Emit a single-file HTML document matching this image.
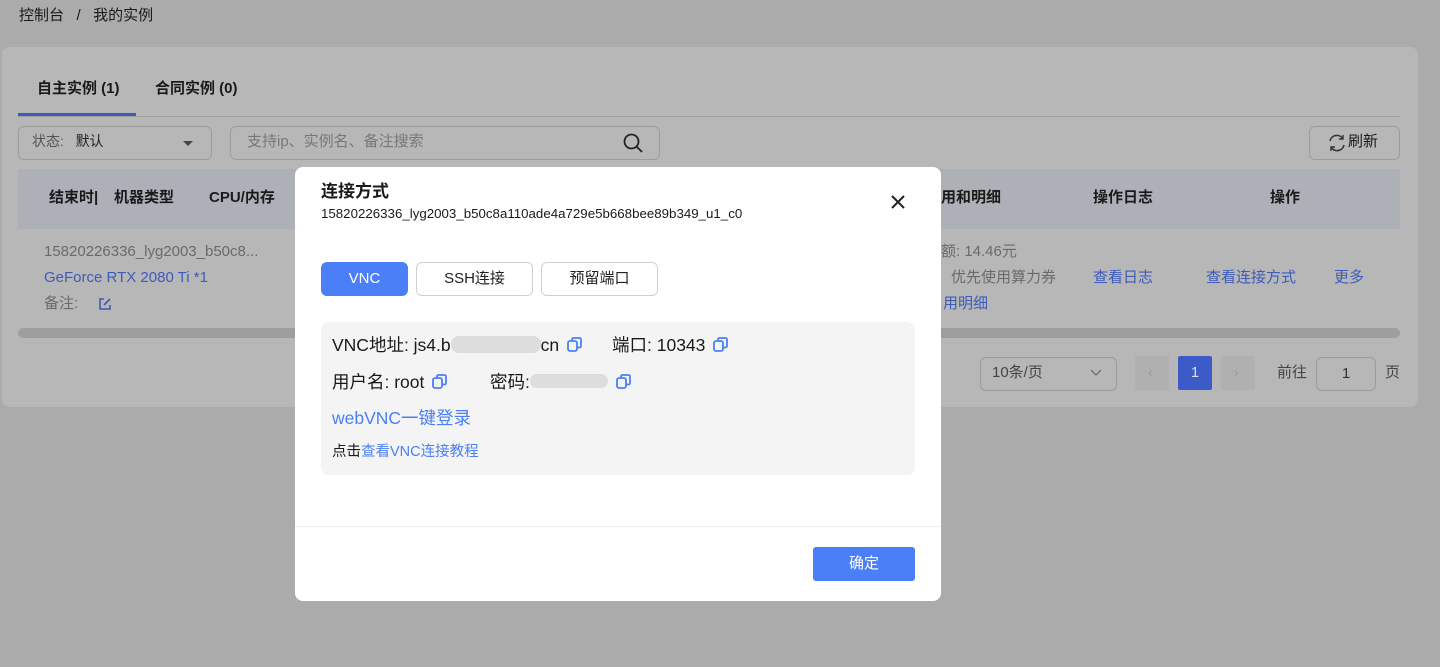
<!DOCTYPE html>
<html><head><meta charset="utf-8"><style>
*{box-sizing:border-box;margin:0;padding:0}
body{width:1440px;height:667px;overflow:hidden;background:#ababab;font-family:"Liberation Sans","Noto Sans CJK SC",sans-serif;color:#1a1a1a;position:relative}
.abs{position:absolute}
.card{left:2px;top:47px;width:1416px;height:360px;background:#b7b7b7;border-radius:8px}
.t{font-size:14px;white-space:nowrap;line-height:1.2}
.blue{color:#3d5bb8}
.input{border:1px solid #9c9c9c;border-radius:6px;background:#b7b7b7}
.modal{left:295px;top:167px;width:646px;height:434px;background:#fff;border-radius:8px}
.btn{position:absolute;top:95px;height:34px;border-radius:6px;border:1px solid #d0d0d0;font-size:15px;text-align:center;line-height:32px;color:#222}
.cp{display:inline-block;vertical-align:-1px;margin-left:8px}
</style></head><body>
<div class="abs t" style="left:19px;top:7px;font-size:15px">控制台 &nbsp;&nbsp;/ &nbsp;&nbsp;我的实例</div>
<div class="abs card"></div>
<div class="abs t" style="left:37px;top:80px;font-weight:bold;font-size:15px">自主实例 (1)</div>
<div class="abs t" style="left:155px;top:80px;font-weight:bold;font-size:15px">合同实例 (0)</div>
<div class="abs" style="left:18px;top:113px;width:118px;height:3px;background:#3d5bb8"></div>
<div class="abs" style="left:18px;top:116px;width:1382px;height:1px;background:#a0a0a0"></div>
<div class="abs input" style="left:18px;top:126px;width:194px;height:34px"></div>
<div class="abs t" style="left:32px;top:133px;color:#555">状态: &nbsp;&nbsp;<span style="color:#222">默认</span></div>
<div class="abs" style="left:183px;top:141px;border:5px solid transparent;border-top-color:#444"></div>
<div class="abs input" style="left:230px;top:126px;width:430px;height:34px"></div>
<div class="abs t" style="left:247px;top:133px;color:#777;font-size:15px">支持ip、实例名、备注搜索</div>
<svg class="abs" style="left:622px;top:132px" width="22" height="22" viewBox="0 0 22 22"><circle cx="9.5" cy="9.5" r="7" fill="none" stroke="#222" stroke-width="1.8"/><path d="M15 15l5 5" stroke="#222" stroke-width="1.8"/></svg>
<div class="abs input" style="left:1309px;top:126px;width:91px;height:34px"></div>
<svg class="abs" style="left:1327px;top:133px" width="20" height="20" viewBox="0 0 20 20"><path d="M16 6A7 7 0 0 0 3 8M4 14a7 7 0 0 0 13-2" fill="none" stroke="#333" stroke-width="1.6"/><path d="M16 2v4h-4M4 18v-4h4" fill="none" stroke="#333" stroke-width="1.4"/></svg>
<div class="abs t" style="left:1348px;top:133px;font-size:15px">刷新</div>
<div class="abs" style="left:18px;top:169px;width:1382px;height:60px;background:#adb1b7"></div>
<div class="abs t" style="left:49px;top:189px;font-weight:bold;font-size:15px">结束时|</div>
<div class="abs t" style="left:114px;top:189px;font-weight:bold;font-size:15px">机器类型</div>
<div class="abs t" style="left:209px;top:189px;font-weight:bold;font-size:15px">CPU/内存</div>
<div class="abs t" style="left:941px;top:189px;font-weight:bold;font-size:15px">用和明细</div>
<div class="abs t" style="left:1093px;top:189px;font-weight:bold;font-size:15px">操作日志</div>
<div class="abs t" style="left:1270px;top:189px;font-weight:bold;font-size:15px">操作</div>
<div class="abs t" style="left:44px;top:243px;color:#6a6a6a;font-size:15px">15820226336_lyg2003_b50c8...</div>
<div class="abs t blue" style="left:44px;top:269px;font-size:15px">GeForce RTX 2080 Ti *1</div>
<div class="abs t" style="left:44px;top:295px;color:#6a6a6a;font-size:15px">备注:</div>
<svg class="abs" style="left:98px;top:297px" width="14" height="14" viewBox="0 0 14 14"><path d="M6 2H2v10h10V8M6 8l6-6" fill="none" stroke="#3d5bb8" stroke-width="1.6"/></svg>
<div class="abs t" style="left:941px;top:243px;color:#6a6a6a;font-size:15px">额: 14.46元</div>
<div class="abs t" style="left:951px;top:269px;color:#6a6a6a;font-size:15px">优先使用算力券</div>
<div class="abs t blue" style="left:943px;top:295px;font-size:15px">用明细</div>
<div class="abs t blue" style="left:1093px;top:269px;font-size:15px">查看日志</div>
<div class="abs t blue" style="left:1206px;top:269px;font-size:15px">查看连接方式</div>
<div class="abs t blue" style="left:1334px;top:269px;font-size:15px">更多</div>
<div class="abs" style="left:18px;top:328px;width:1382px;height:10px;border-radius:5px;background:#9e9e9e"></div>
<div class="abs input" style="left:980px;top:357px;width:137px;height:34px"></div>
<div class="abs t" style="left:992px;top:364px;color:#444;font-size:15px">10条/页</div>
<svg class="abs" style="left:1090px;top:369px" width="12" height="8"><path d="M1 1l5 5 5-5" fill="none" stroke="#666" stroke-width="1.2"/></svg>
<div class="abs" style="left:1135px;top:356px;width:34px;height:34px;background:#b0b0b0;border-radius:2px"></div>
<div class="abs t" style="left:1148px;top:364px;color:#999">‹</div>
<div class="abs" style="left:1178px;top:356px;width:34px;height:34px;background:#3d5bc8;border-radius:2px;color:#ddd;text-align:center;line-height:34px;font-size:15px">1</div>
<div class="abs" style="left:1221px;top:356px;width:34px;height:34px;background:#b0b0b0;border-radius:2px"></div>
<div class="abs t" style="left:1234px;top:364px;color:#999">›</div>
<div class="abs t" style="left:1277px;top:364px;color:#444;font-size:15px">前往</div>
<div class="abs input" style="left:1316px;top:357px;width:60px;height:34px;text-align:center;line-height:32px;font-size:15px;color:#333">1</div>
<div class="abs t" style="left:1385px;top:364px;color:#444;font-size:15px">页</div>

<div class="abs modal">
 <div class="abs t" style="left:26px;top:15px;font-size:17px;font-weight:bold">连接方式</div>
 <div class="abs t" style="left:26px;top:39px;font-size:13.3px">15820226336_lyg2003_b50c8a110ade4a729e5b668bee89b349_u1_c0</div>
 <svg class="abs" style="left:595px;top:27px" width="16" height="16"><path d="M2 2l12 12M14 2L2 14" stroke="#222" stroke-width="2"/></svg>
 <div class="btn" style="left:26px;width:87px;background:#4a7ff7;border-color:#4a7ff7;color:#fff">VNC</div>
 <div class="btn" style="left:121px;width:117px">SSH连接</div>
 <div class="btn" style="left:246px;width:117px">预留端口</div>
 <div class="abs" style="left:26px;top:155px;width:594px;height:153px;background:#f4f4f5;border-radius:8px"></div>
 <div class="abs t" style="left:37px;top:168px;font-size:17.5px">VNC地址: js4.b<span style="display:inline-block;width:90px;height:17px;background:#ddd;border-radius:8px;vertical-align:-2px"></span>cn<svg class="cp" width="15" height="15"><rect x="1" y="4" width="9" height="10" rx="2" fill="none" stroke="#4a7ff7" stroke-width="1.8"/><path d="M5 4V2.5A1.5 1.5 0 0 1 6.5 1H12.5A1.5 1.5 0 0 1 14 2.5V9A1.5 1.5 0 0 1 12.5 10.5H10" fill="none" stroke="#4a7ff7" stroke-width="1.8"/></svg></div>
 <div class="abs t" style="left:317px;top:168px;font-size:17.5px">端口: 10343<svg class="cp" width="15" height="15"><rect x="1" y="4" width="9" height="10" rx="2" fill="none" stroke="#4a7ff7" stroke-width="1.8"/><path d="M5 4V2.5A1.5 1.5 0 0 1 6.5 1H12.5A1.5 1.5 0 0 1 14 2.5V9A1.5 1.5 0 0 1 12.5 10.5H10" fill="none" stroke="#4a7ff7" stroke-width="1.8"/></svg></div>
 <div class="abs t" style="left:37px;top:205px;font-size:17.5px">用户名: root<svg class="cp" width="15" height="15"><rect x="1" y="4" width="9" height="10" rx="2" fill="none" stroke="#4a7ff7" stroke-width="1.8"/><path d="M5 4V2.5A1.5 1.5 0 0 1 6.5 1H12.5A1.5 1.5 0 0 1 14 2.5V9A1.5 1.5 0 0 1 12.5 10.5H10" fill="none" stroke="#4a7ff7" stroke-width="1.8"/></svg></div>
 <div class="abs t" style="left:195px;top:205px;font-size:17.5px">密码:<span style="display:inline-block;width:78px;height:14px;background:#ddd;border-radius:7px;vertical-align:0"></span><svg class="cp" width="15" height="15"><rect x="1" y="4" width="9" height="10" rx="2" fill="none" stroke="#4a7ff7" stroke-width="1.8"/><path d="M5 4V2.5A1.5 1.5 0 0 1 6.5 1H12.5A1.5 1.5 0 0 1 14 2.5V9A1.5 1.5 0 0 1 12.5 10.5H10" fill="none" stroke="#4a7ff7" stroke-width="1.8"/></svg></div>
 <div class="abs t" style="left:37px;top:241px;font-size:17.5px;color:#4a7ff7">webVNC一键登录</div>
 <div class="abs t" style="left:37px;top:277px;font-size:14.5px">点击<span style="color:#4a7ff7">查看VNC连接教程</span></div>
 <div class="abs" style="left:0;top:359px;width:646px;height:1px;background:#f0f0f0"></div>
 <div class="abs" style="left:518px;top:380px;width:102px;height:34px;background:#4a7ff7;border-radius:3px;color:#fff;text-align:center;line-height:34px;font-size:15px">确定</div>
</div>
</body></html>
